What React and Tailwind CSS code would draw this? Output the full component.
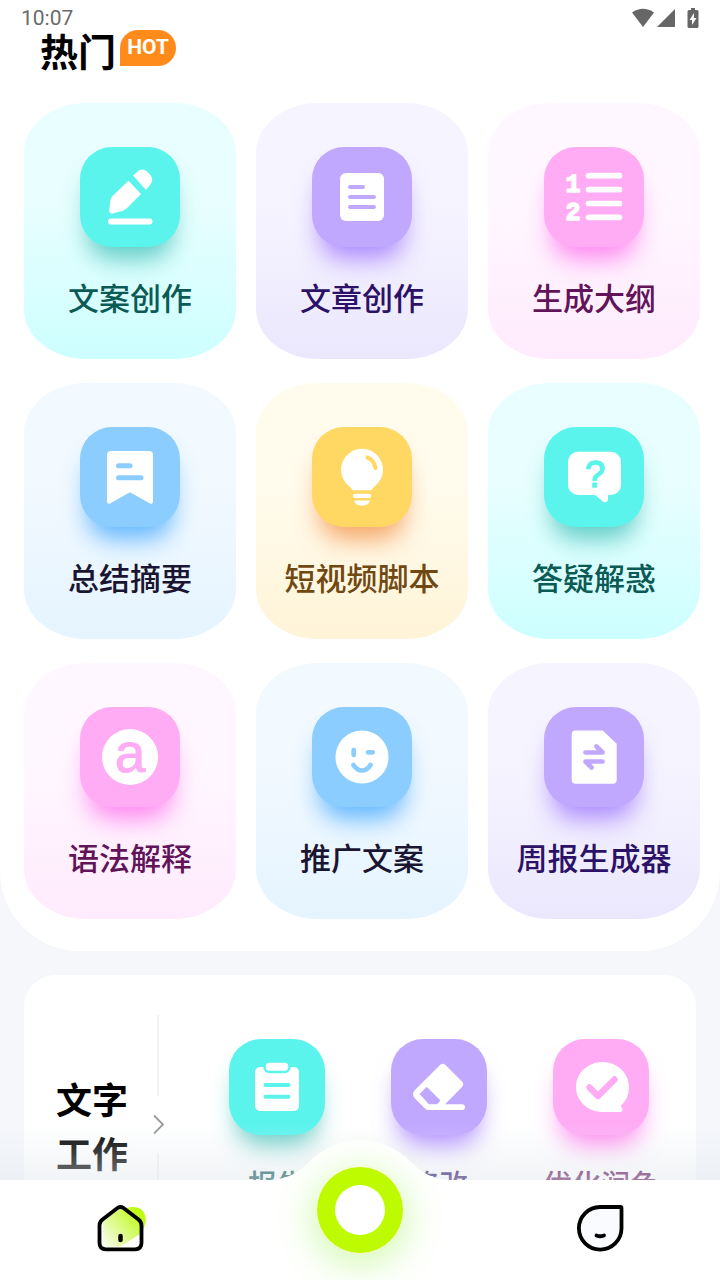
const themes = {
  teal: {
    card: 'from-[#e8feff] to-[#ccfffe]',
    tile: 'bg-[#5af4ed] shadow-[0_20px_24px_-8px_rgba(40,184,172,0.7)]',
    label: 'text-[#0c5a55]',
  },
  purple: {
    card: 'from-[#f6f4ff] to-[#ebe7fd]',
    tile: 'bg-[#c1a8ff] shadow-[0_20px_24px_-8px_rgba(150,105,255,0.75)]',
    label: 'text-[#2b1267]',
  },
  pink: {
    card: 'from-[#fff7ff] to-[#ffebfd]',
    tile: 'bg-[#ffacf5] shadow-[0_20px_24px_-8px_rgba(255,100,235,0.75)]',
    label: 'text-[#621459]',
  },
  blue: {
    card: 'from-[#f2f9ff] to-[#e5f4ff]',
    tile: 'bg-[#8bcdff] shadow-[0_20px_24px_-8px_rgba(62,166,255,0.8)]',
    label: 'text-[#1a1530]',
  },
  yellow: {
    card: 'from-[#fffbed] to-[#fff4d8]',
    tile: 'bg-[#ffd863] shadow-[0_20px_24px_-8px_rgba(243,138,58,0.75)]',
    label: 'text-[#704812]',
  },
};

function PencilIcon() {
  return (
    <svg viewBox="0 0 100 100" className="size-full" fill="#fff">
      <path d="M53 28.500l4-3.500q5-4.500 10-.5l3 3q4.500 5.500 0 10.500L66 43z" />
      <path d="M48.500 33.700L61 47 46.500 61.500Q44.500 63.300 42 64l-9.500 2.500Q29 67 29.200 63.500l1-9.500q.3-3 2.300-5z" />
      <rect x="28" y="71.500" width="44.500" height="6" rx="3" />
    </svg>
  );
}

function ArticleIcon() {
  return (
    <svg viewBox="0 0 100 100" className="size-full">
      <rect x="28" y="26" width="44" height="48" rx="6" fill="#fff" />
      <path d="M38 40h13M38 50h24M38 60h24" stroke="#c1a8ff" strokeWidth="4" strokeLinecap="round" />
    </svg>
  );
}

function OutlineIcon() {
  return (
    <svg viewBox="0 0 100 100" className="size-full" fill="#fff" stroke="#fff" strokeLinejoin="round">
      <g fontFamily="Liberation Mono, monospace" fontWeight="700" fontSize="25" strokeWidth="1.500" textAnchor="middle">
        <text x="29" y="45">1</text>
        <text x="29" y="73">2</text>
      </g>
      <path d="M44.500 28.700h31M44.500 42.600h31M44.500 56.500h31M44.500 70.300h31" strokeWidth="5.700" strokeLinecap="round" />
    </svg>
  );
}

function BookmarkIcon() {
  return (
    <svg viewBox="0 0 100 100" className="size-full">
      <path d="M31 24h38q4 0 4 4v46.500q0 3-3 2L50 65.300 30 76.500q-3 1-3-2V28q0-4 4-4z" fill="#fff" />
      <path d="M38.500 38.700h11.500M38.500 50.700h22.500" stroke="#8bcdff" strokeWidth="5" strokeLinecap="round" />
    </svg>
  );
}

function BulbIcon() {
  return (
    <svg viewBox="0 0 100 100" className="size-full" fill="#fff">
      <path d="M50 21.700a21 21 0 0 1 14 36.600q-3.500 2.700-4.500 5H40.500q-1-2.300-4.500-5A21 21 0 0 1 50 21.700z" />
      <rect x="41" y="66.700" width="18" height="4.300" rx="2" />
      <path d="M42 73.500h16q-1.500 5.200-8 5.200t-8-5.200z" />
      <path d="M55.500 30.500q6 2 8 10.500" fill="none" stroke="#ffd863" strokeWidth="4" strokeLinecap="round" />
    </svg>
  );
}

function QuestionIcon() {
  return (
    <svg viewBox="0 0 100 100" className="size-full">
      <path d="M34 24.700h33a10 10 0 0 1 10 10V58a10 10 0 0 1-10 10h-3v4q0 4-4.500 3L51 68H34a10 10 0 0 1-10-10V34.700a10 10 0 0 1 10-10z" fill="#fff" />
      <text x="51" y="60" textAnchor="middle" fontFamily="Liberation Sans, sans-serif" fontSize="36" fill="#5af4ed" stroke="#5af4ed" strokeWidth="1.500" strokeLinejoin="round">
        ?
      </text>
    </svg>
  );
}

function GrammarIcon() {
  return (
    <svg viewBox="0 0 100 100" className="size-full">
      <circle cx="50" cy="50" r="28" fill="#fff" />
      <text x="50" y="65" textAnchor="middle" fontFamily="Liberation Sans, sans-serif" fontSize="55" fill="#ffacf5" stroke="#ffacf5" strokeWidth="1">
        a
      </text>
    </svg>
  );
}

function SmileIcon() {
  return (
    <svg viewBox="0 0 100 100" className="size-full" fill="none">
      <circle cx="50" cy="50" r="26.500" fill="#fff" />
      <path d="M41.700 43v5M56 45.300h4.700M41.500 58q3.500 5.500 8.500 5.500t8.500-5.500" stroke="#8bcdff" strokeWidth="4.700" strokeLinecap="round" />
    </svg>
  );
}

function WeeklyIcon() {
  return (
    <svg viewBox="0 0 100 100" className="size-full" fill="none">
      <path d="M31.700 23.500h27l14 13.200v36q0 4-4 4h-37q-4 0-4-4v-45q0-4.200 4-4.200z" fill="#fff" />
      <path d="M41.500 45.500h17l-6-6M58.500 54.500h-17l6 6" stroke="#c1a8ff" strokeWidth="4.700" strokeLinecap="round" strokeLinejoin="round" />
    </svg>
  );
}

function ClipboardIcon() {
  return (
    <svg viewBox="0 0 96 96" className="size-full">
      <rect x="26" y="28" width="44" height="44" rx="5" fill="#fff" />
      <rect x="35.500" y="22.500" width="25" height="10.500" rx="5" fill="#fff" stroke="#5af4ed" strokeWidth="2.500" />
      <path d="M36.500 46h23M36.500 57.700h23" stroke="#5af4ed" strokeWidth="4" strokeLinecap="round" />
    </svg>
  );
}

function EraserIcon() {
  return (
    <svg viewBox="0 0 96 96" className="size-full">
      <path
        fill="#fff"
        fillRule="evenodd"
        d="M49 26q2.700-2.300 5.500 0L71 42.500q2.500 2.500 0 5.500L54 65.300h17q3 0 3 2.900 0 2.800-3 2.800H38q-2.500 0-4-1.500L23.500 59q-3-4 0-7.500zM35.700 47.700L28.500 55l9.500 10.300h8l3.500-3.800z"
      />
    </svg>
  );
}

function PolishIcon() {
  return (
    <svg viewBox="0 0 96 96" className="size-full" fill="none">
      <path d="M49.500 23C64 23 76 34 76 48q0 11.500-8.500 19l2 2.500q.5 3.500-2.500 3.500H49.500C35 73 23 62 23 48s12-25 26.500-25z" fill="#fff" />
      <path d="M36.500 48.500L45 57l16.500-16.500" stroke="#ffacf5" strokeWidth="6.500" strokeLinecap="round" strokeLinejoin="round" />
    </svg>
  );
}

const hotTools = [
  { label: '文案创作', theme: 'teal', Icon: PencilIcon },
  { label: '文章创作', theme: 'purple', Icon: ArticleIcon },
  { label: '生成大纲', theme: 'pink', Icon: OutlineIcon },
  { label: '总结摘要', theme: 'blue', Icon: BookmarkIcon },
  { label: '短视频脚本', theme: 'yellow', Icon: BulbIcon },
  { label: '答疑解惑', theme: 'teal', Icon: QuestionIcon },
  { label: '语法解释', theme: 'pink', Icon: GrammarIcon },
  { label: '推广文案', theme: 'blue', Icon: SmileIcon },
  { label: '周报生成器', theme: 'purple', Icon: WeeklyIcon },
];

const writingTools = [
  { label: '报告', theme: 'teal', Icon: ClipboardIcon },
  { label: '修改', theme: 'purple', Icon: EraserIcon },
  { label: '优化润色', theme: 'pink', Icon: PolishIcon },
];

function StatusBar() {
  return (
    <div className="absolute inset-x-0 top-0 z-10 flex h-9 items-center justify-between pl-[21px] pr-[21px] font-[Roboto,sans-serif] text-[21px] leading-6 text-[#6a6a6a]">
      <span>10:07</span>
      <div className="flex items-center">
        <svg viewBox="0 0 24 20" className="h-5 w-6" fill="#666">
          <path d="M1 4.500Q12-3 23 4.500L12 19z" />
        </svg>
        <svg viewBox="0 0 20 20" className="ml-[2px] h-5 w-5" fill="#666">
          <path d="M18 1v18H0z" />
        </svg>
        <svg viewBox="0 0 12 20" className="ml-[10px] h-5 w-3">
          <path d="M4 0h4v2h2q1.500 0 1.500 1.500v15Q11.500 20 10 20H2Q.5 20 .5 18.500v-15Q.5 2 2 2h2z" fill="#666" />
          <path d="M7 5v5h2.500L5 17v-5H2.500z" fill="#fff" />
        </svg>
      </div>
    </div>
  );
}

function ToolCard({ label, theme, Icon }) {
  const t = themes[theme];
  return (
    <button
      className={`flex flex-col items-center rounded-[62px/50px] bg-linear-to-b from-40% pt-11 pb-[42px] ${t.card}`}
    >
      <span className={`size-[100px] rounded-[32px] ${t.tile}`}>
        <Icon />
      </span>
      <span className={`mt-[30px] text-[31px] leading-10 font-medium whitespace-nowrap ${t.label}`}>{label}</span>
    </button>
  );
}

function HotSection() {
  return (
    <section className="rounded-b-[80px] bg-white pt-[26px] pr-5 pb-8 pl-6">
      <header className="flex h-[77px] items-start pl-4">
        <h1 className="text-[38px] leading-[48px] font-bold text-black">热门</h1>
        <span className="mt-1 ml-1 flex h-9 w-14 items-center justify-center rounded-[18px] rounded-bl-none bg-[#ff8b1a] font-[Roboto,sans-serif] text-[21px] font-bold text-white">
          HOT
        </span>
      </header>
      <div className="grid grid-cols-3 gap-x-5 gap-y-6">
        {hotTools.map((tool) => (
          <ToolCard key={tool.label} {...tool} />
        ))}
      </div>
    </section>
  );
}

function WritingSection() {
  return (
    <section className="mx-6 mt-6 flex rounded-[32px] bg-white py-10 pr-[14px] pl-8">
      <h2 className="w-[72px] self-center text-[36px] leading-[54px] font-bold text-black">文字工作</h2>
      <div className="ml-6 flex w-3 flex-col items-center">
        <div className="w-[2px] flex-1 bg-[#f3f3f3]" />
        <svg viewBox="0 0 12 57" className="h-[57px] w-3" fill="none" stroke="#999" strokeWidth="1.800">
          <path d="M2 19.500l9 9-9 9" />
        </svg>
        <div className="w-[2px] flex-1 bg-[#f3f3f3]" />
      </div>
      <div className="ml-8 grid flex-1 grid-cols-3 pt-6 pb-[31px]">
        {writingTools.map(({ label, theme, Icon }) => (
          <button key={label} className="flex flex-col items-center">
            <span className={`size-24 rounded-[32px] ${themes[theme].tile}`}>
              <Icon />
            </span>
            <span className={`mt-7 text-[29px] leading-10 font-medium whitespace-nowrap ${themes[theme].label}`}>
              {label}
            </span>
          </button>
        ))}
      </div>
    </section>
  );
}

function HomeIcon() {
  return (
    <svg viewBox="0 0 52 52" className="size-[52px]" fill="none">
      <defs>
        <linearGradient id="home-fill" x1="8" y1="42" x2="46" y2="12" gradientUnits="userSpaceOnUse">
          <stop stopColor="#c3f53c" stopOpacity="0.1" />
          <stop offset="1" stopColor="#bdfb10" />
        </linearGradient>
      </defs>
      <path d="M25 8L37 5q11-1 14 8 3 9-5 19L29 43q-3 2-6 2H12q-3 0-3-4V21q0-3 3-5z" fill="url(#home-fill)" />
      <path
        d="M8.500 17.500L23.500 6q3-2 6 0l15 11.500q3 2.500 3 6v17.300q0 6.500-6.500 6.500H12q-6.500 0-6.500-6.500V23.500q0-3.500 3-6z"
        stroke="#000"
        strokeWidth="3.800"
      />
      <path d="M26.500 34v4" stroke="#000" strokeWidth="4.500" strokeLinecap="round" />
    </svg>
  );
}

function ProfileIcon() {
  return (
    <svg viewBox="0 0 52 52" className="size-[52px]" fill="none" stroke="#000" strokeWidth="3.800">
      <path d="M26 5h20.500q1 0 1 1v20.500A21.300 21.300 0 1 1 26 5z" fill="#fafbff" />
      <path d="M22.500 33.500q3.500 1.500 7.500 0" strokeLinecap="round" />
    </svg>
  );
}

function BottomNav() {
  return (
    <nav className="absolute inset-x-0 bottom-0 h-[100px] bg-white">
      <div className="pointer-events-none absolute inset-x-0 bottom-full h-14 bg-linear-to-b from-[#e4e9ef]/0 to-[#e4e9ef]/50" />
      <svg viewBox="0 0 180 41" className="absolute bottom-[99px] left-1/2 h-[41px] w-[180px] -translate-x-1/2" fill="#fff">
        <path d="M0 41V40C18 39 27 33 38 23 53 8 70 0 90 0s37 8 52 23c11 10 20 16 38 17v1z" />
      </svg>
      <div className="relative grid h-full grid-cols-3">
        <a href="#home" aria-label="首页" className="flex items-start justify-center pt-[22px]">
          <HomeIcon />
        </a>
        <div className="flex justify-center">
          <button
            aria-label="开始"
            className="-mt-[14px] size-[88px] rounded-full border border-[#fdf8d8] bg-[#bffb00] p-[18px] shadow-[0_8px_36px_4px_rgba(160,245,90,0.45)]"
          >
            <span className="block size-[50px] rounded-full bg-white" />
          </button>
        </div>
        <a href="#profile" aria-label="我的" className="flex items-start justify-center pt-[22px]">
          <ProfileIcon />
        </a>
      </div>
    </nav>
  );
}

export default function App() {
  return (
    <div
      lang="zh-CN"
      className="relative h-screen overflow-hidden bg-[#f5f7fb] font-['Noto_Sans_CJK_SC',sans-serif]"
    >
      <StatusBar />
      <main className="h-full overflow-y-auto pb-[124px] [scrollbar-width:none]">
        <HotSection />
        <WritingSection />
      </main>
      <BottomNav />
    </div>
  );
}
